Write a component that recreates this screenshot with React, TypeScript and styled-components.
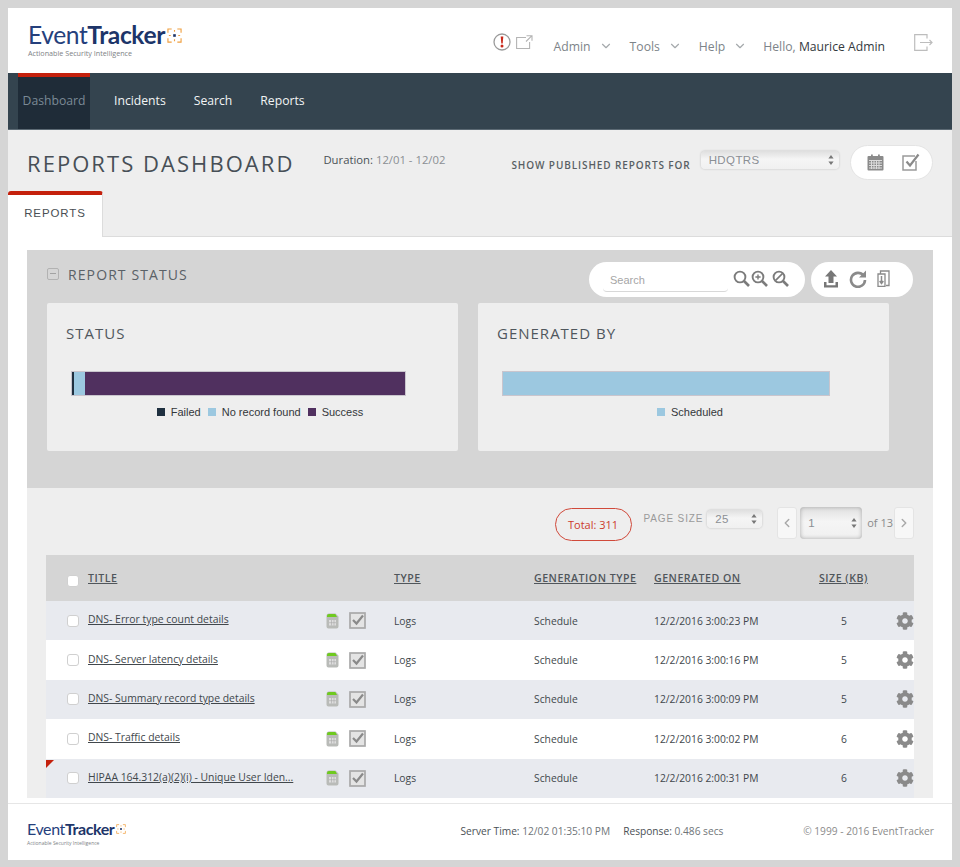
import React from 'react';
import styled, { createGlobalStyle } from 'styled-components';
import { ChevronDown, ChevronLeft, ChevronRight } from 'lucide-react';
import { FaCog } from 'react-icons/fa';

const GlobalStyle = createGlobalStyle`
  html, body {
    margin: 0;
    height: 867px;
    overflow: hidden;
    background: #d5d5d5;
    font-family: "Open Sans", "Liberation Sans", sans-serif;
    -webkit-font-smoothing: antialiased;
  }
  * { box-sizing: border-box; }
`;

const Frame = styled.div`
  padding: 8px;
  width: 960px;
  height: 867px;
`;

const Win = styled.div`
  display: flex;
  flex-direction: column;
  width: 944px;
  height: 852px;
  background: #fff;
  overflow: hidden;
`;

const Header = styled.header`
  display: flex;
  align-items: center;
  justify-content: space-between;
  flex: 0 0 65px;
  padding: 0 19px 0 20px;
`;

const LogoBox = styled.div<{ $small?: boolean }>`
  display: flex;
  flex-direction: column;
  margin-top: ${(p) => (p.$small ? '4px' : '-1px')};
`;

const LogoRow = styled.div`
  display: flex;
  align-items: center;
  gap: 2px;
`;

const LogoWord = styled.div<{ $small?: boolean }>`
  font-family: "Lato", "Open Sans", sans-serif;
  font-size: ${(p) => (p.$small ? '16px' : '24.6px')};
  line-height: ${(p) => (p.$small ? '18px' : '26px')};
  letter-spacing: -0.4px;
  color: #25407c;
  b { font-weight: 700; color: #1d3569; }
`;

const LogoTag = styled.div<{ $small?: boolean }>`
  font-size: ${(p) => (p.$small ? '5px' : '7.2px')};
  line-height: ${(p) => (p.$small ? '7px' : '9px')};
  color: #7e8286;
  margin-top: ${(p) => (p.$small ? '2px' : '1px')};
`;

const HeaderRight = styled.div`
  display: flex;
  align-items: center;
  margin-top: 11px;
`;

const AlertIcons = styled.div`
  display: flex;
  align-items: center;
  gap: 5px;
  margin-right: 21px;
  margin-top: -8px;
`;

const TopLink = styled.div`
  display: flex;
  align-items: center;
  gap: 8px;
  margin-right: 17px;
  font-size: 12.2px;
  color: #7d8489;
`;

const Hello = styled.div`
  font-size: 12.2px;
  color: #7d8489;
  margin-left: -1px;
  margin-right: 29px;
  b { font-weight: 400; color: #33393e; }
`;

const Logout = styled.div`
  display: flex;
  margin-top: -8px;
`;

const NavBar = styled.nav`
  display: flex;
  flex: 0 0 57px;
  padding-left: 10px;
  background: #34444f;
  border-bottom: 1px solid #5c6a74;
`;

const NavItem = styled.div<{ $active?: boolean }>`
  display: flex;
  align-items: center;
  justify-content: center;
  padding-bottom: ${(p) => (p.$active ? '6px' : '2px')};
  font-size: 12.2px;
  color: ${(p) => (p.$active ? '#7b8a96' : '#f2f4f5')};
  background: ${(p) => (p.$active ? '#1f2c38' : 'transparent')};
  border-top: ${(p) => (p.$active ? '4px solid #c4200c' : '0')};
  width: ${(p) => (p.$active ? '72px' : 'auto')};
  margin-right: ${(p) => (p.$active ? '24px' : '28px')};
`;

const TitleArea = styled.div`
  flex: 0 0 107px;
  background: #eeeeee;
  border-bottom: 1px solid #dcdcdc;
  display: flex;
  flex-direction: column;
`;

const TitleRow = styled.div`
  display: flex;
  align-items: center;
  height: 61px;
  padding: 5px 19px 0 19px;
`;

const PageTitle = styled.h1`
  margin: 0;
  font-size: 22px;
  font-weight: 400;
  letter-spacing: 2.05px;
  color: #474f56;
  white-space: nowrap;
`;

const Duration = styled.div`
  margin-left: 29px;
  margin-top: -8px;
  font-size: 11.3px;
  color: #4a5156;
  white-space: nowrap;
  span { color: #8a8f93; }
`;

const ShowLabel = styled.div`
  margin-left: 66px;
  margin-top: 4px;
  font-size: 10px;
  font-weight: 600;
  letter-spacing: 0.9px;
  color: #585f64;
  white-space: nowrap;
`;

const FakeSelect = styled.div<{ $w: number; $h: number; $big?: boolean }>`
  display: flex;
  align-items: center;
  justify-content: space-between;
  width: ${(p) => p.$w}px;
  height: ${(p) => p.$h}px;
  padding: 0 5px 0 8px;
  font-family: "Liberation Sans", sans-serif;
  font-size: 11.5px;
  letter-spacing: 0.4px;
  color: #8b8f94;
  border-radius: 4px;
  background: linear-gradient(#dfdfdf, #f5f5f5 45%, #f0f0f0);
  box-shadow: ${(p) => (p.$big ? 'inset 0 0 4px #a8a8a8' : '0 0 2px #b5b5b5')};
`;

const PublishedSelect = styled(FakeSelect)`
  margin-left: 10px;
  margin-top: -6px;
`;

const PageSizeSelect = styled(FakeSelect)`
  margin-top: 3px;
  margin-right: 15px;
`;

const PageSelect = styled(FakeSelect)`
  margin-left: 3px;
`;

const Pill = styled.div<{ $w: number; $h?: number }>`
  display: flex;
  align-items: center;
  width: ${(p) => p.$w}px;
  height: ${(p) => p.$h ?? 35}px;
  background: #fff;
  border-radius: 18px;
`;

const ActionPill = styled(Pill)`
  margin-left: 11px;
  margin-top: -2px;
  padding-left: 16px;
  gap: 18px;
  border: 1px solid #e4e4e4;
`;

const Tab = styled.div`
  width: 95px;
  height: 46px;
  padding-top: 12px;
  text-align: center;
  font-family: "Liberation Sans", sans-serif;
  font-size: 11.5px;
  letter-spacing: 0.9px;
  color: #4a4f54;
  background: #fff;
  border-top: 4px solid #c4200c;
  border-right: 1px solid #dcdcdc;
  border-radius: 3px 3px 0 0;
  margin-bottom: -1px;
`;

const Content = styled.main`
  flex: 1;
  min-height: 0;
  padding: 13px 19px 0;
  background: #fff;
`;

const StatusPanel = styled.section`
  height: 238px;
  padding: 12px 20px 0 19px;
  background: #d5d5d5;
`;

const StatusHead = styled.div`
  display: flex;
  align-items: center;
  height: 35px;
`;

const Collapse = styled.div`
  display: flex;
  align-items: center;
  justify-content: center;
  width: 12px;
  height: 12px;
  margin: -12px 9px 0 1px;
  border: 1px solid #b2b2b2;
  border-radius: 2px;
  &::after {
    content: '';
    width: 6px;
    height: 1px;
    background: #a2a2a2;
  }
`;

const StatusTitle = styled.h2`
  flex: 1;
  margin: -11px 0 0;
  font-size: 14px;
  font-weight: 400;
  letter-spacing: 1.1px;
  color: #5a6167;
`;

const SearchPill = styled(Pill)`
  padding-left: 14px;
  margin-right: 6px;
`;

const SearchBox = styled.div`
  width: 125px;
  height: 20px;
  padding: 2px 0 0 7px;
  margin-top: 4px;
  font-family: "Liberation Sans", sans-serif;
  font-size: 11px;
  color: #a6a6a6;
  border-bottom: 1px solid #d8d8d8;
  border-radius: 0 0 4px 4px;
`;

const SearchIcons = styled.div`
  display: flex;
  align-items: center;
  gap: 1px;
  margin: -2px 0 0 5px;
`;

const IconSpacer = styled.span`
  width: 2px;
`;

const ToolPill = styled(Pill)`
  padding-left: 12px;
  padding-bottom: 2px;
  gap: 10px;
`;

const Cards = styled.div`
  display: flex;
  gap: 20px;
  margin-top: 6px;
  margin-left: 1px;
`;

const Card = styled.div`
  width: 411px;
  height: 148px;
  padding: 19px 0 0 19px;
  background: #eeeeee;
  border-radius: 2px;
`;

const CardTitle = styled.h3`
  margin: 0;
  font-size: 15px;
  line-height: 22px;
  font-weight: 400;
  letter-spacing: 1px;
  color: #50575d;
`;

const Bar = styled.div<{ $w: number }>`
  display: flex;
  width: ${(p) => p.$w}px;
  height: 25px;
  margin: 27px 0 0 5px;
  border: 1px solid #c9c5cd;
`;

const BarPart = styled.div<{ $color: string; $w?: number }>`
  flex: ${(p) => (p.$w ? `0 0 ${p.$w}px` : '1')};
  background: ${(p) => p.$color};
`;

const Legend = styled.div<{ $w: number }>`
  display: flex;
  justify-content: center;
  gap: 7px;
  width: ${(p) => p.$w}px;
  margin-top: 9px;
  font-family: "Liberation Sans", sans-serif;
  font-size: 11px;
  line-height: 14px;
  color: #33373a;
`;

const LegendItem = styled.span<{ $color: string }>`
  display: flex;
  align-items: center;
  gap: 6px;
  white-space: nowrap;
  &::before {
    content: '';
    width: 8px;
    height: 8px;
    background: ${(p) => p.$color};
  }
`;

const ListPanel = styled.section`
  height: 310px;
  padding: 0 19px;
  background: #eeeeee;
`;

const Pager = styled.div`
  display: flex;
  align-items: flex-start;
  justify-content: flex-end;
  height: 67px;
  padding-top: 19px;
`;

const Total = styled.div`
  display: flex;
  align-items: center;
  justify-content: center;
  width: 77px;
  height: 33px;
  margin: 1px 12px 0 0;
  font-size: 11px;
  color: #cc3b2c;
  border: 1px solid #d0493a;
  border-radius: 17px;
`;

const PageSizeLabel = styled.div`
  margin: 4px 4px 0 0;
  font-family: "Liberation Sans", sans-serif;
  font-size: 10px;
  line-height: 16px;
  letter-spacing: 0.85px;
  color: #9a9a9a;
`;

const PagerBtn = styled.div`
  display: flex;
  align-items: center;
  justify-content: center;
  width: 20px;
  height: 32px;
  color: #a9a9a9;
  background: #f7f7f7;
  border: 1px solid #e4e4e4;
  border-radius: 3px;
`;

const OfPages = styled.div`
  margin: 8px 1px 0 5px;
  font-size: 11px;
  color: #8a8a8a;
  white-space: nowrap;
`;

const Grid = styled.div`
  display: grid;
  grid-template-columns: 42px 238px 23px 45px 140px 120px 165px 50px 45px;
  align-items: center;
  font-size: 10.3px;
  color: #41474c;
`;

const HeadRow = styled(Grid)`
  height: 46px;
  background: #d5d5d5;
  font-size: 10.6px;
  font-weight: 600;
  letter-spacing: 0.5px;
  color: #50565b;
  span {
    text-decoration: underline;
    white-space: nowrap;
  }
`;

const Row = styled(Grid)<{ $odd: boolean }>`
  position: relative;
  height: 39.4px;
  background: ${(p) => (p.$odd ? '#e8eaef' : '#fff')};
`;

const Flag = styled.div`
  position: absolute;
  left: 0;
  top: 1px;
  border-top: 8px solid #c4200c;
  border-right: 8px solid transparent;
`;

const Check = styled.div<{ $head?: boolean }>`
  width: 12px;
  height: 12px;
  margin: ${(p) => (p.$head ? '6px 0 0 21px' : '0 0 0 21px')};
  background: #fff;
  border: 1px solid #d0d0d0;
  border-radius: 3px;
`;

const TitleLink = styled.a`
  font-size: 10.4px;
  color: #41474c;
  text-decoration: underline;
  white-space: nowrap;
  margin-top: -3px;
`;

const Cell = styled.div<{ $center?: boolean }>`
  white-space: nowrap;
  text-align: ${(p) => (p.$center ? 'center' : 'left')};
`;

const Gear = styled.div`
  display: flex;
  justify-content: flex-end;
  color: #8a8a8a;
`;

const Footer = styled.footer`
  display: flex;
  align-items: center;
  flex: 0 0 57px;
  margin-top: 5px;
  padding: 0 18px 2px 19px;
  background: #fff;
  border-top: 1px solid #e6e6e6;
  font-size: 10.2px;
  color: #4a5055;
`;

const FooterStats = styled.div`
  display: flex;
  gap: 13px;
  margin-left: 334px;
  span { color: #6f7579; }
`;

const Copyright = styled.div`
  margin-left: auto;
  color: #8b8b8b;
`;

const TargetMark = ({ size }: { size: number }) => (
  <svg width={size} height={size} viewBox="0 0 16 16" fill="none" stroke="#f0a040" strokeWidth="1.2">
    <path d="M1 5V1h4M11 1h4v4M15 11v4h-4M5 15H1v-4M8 2v2M8 12v2M2 8h2M12 8h2" />
    <rect x="6.6" y="6.6" width="2.8" height="2.8" fill="#1d3569" stroke="none" />
  </svg>
);

const Logo = ({ small }: { small?: boolean }) => (
  <LogoBox $small={small}>
    <LogoRow>
      <LogoWord $small={small}>
        Event<b>Tracker</b>
      </LogoWord>
      <TargetMark size={small ? 10 : 15} />
    </LogoRow>
    <LogoTag $small={small}>Actionable Security Intelligence</LogoTag>
  </LogoBox>
);

const Updown = () => (
  <svg width="6" height="10" viewBox="0 0 6 10" fill="#777">
    <path d="M3 0l2.6 3.6H.4zM3 10L.4 6.4h5.2z" />
  </svg>
);

const Glass = ({ mark }: { mark?: 'plus' | 'slash' }) => (
  <svg width="17" height="17" viewBox="0 0 17 17" fill="none" stroke="#7b7b7b" strokeWidth="1.9">
    <circle cx="7" cy="7" r="5.4" />
    <path d="M11 11l5 5" strokeWidth="2.6" />
    {mark === 'plus' && <path d="M4.4 7h5.2M7 4.4v5.2" strokeWidth="1.4" />}
    {mark === 'slash' && <path d="M3.6 10.4l6.8-6.8" strokeWidth="1.6" />}
  </svg>
);

const DocIcon = () => (
  <svg width="13" height="16" viewBox="0 0 13 16">
    <path d="M.5 3A2.5 2.5 0 0 1 3 .5h6.5l3 3v10a2 2 0 0 1-2 2h-8a2 2 0 0 1-2-2z" fill="#b9bbb8" />
    <path d="M1 3a2 2 0 0 1 2-2h6.3L11 4H1z" fill="#6fca1f" />
    <rect x="3" y="7" width="7" height="5.5" fill="#dedede" />
    <path d="M3 9.7h7M5.5 7v5.5M8 7v5.5" stroke="#a8a8a8" strokeWidth="0.6" />
  </svg>
);

const CheckIcon = () => (
  <svg width="17" height="17" viewBox="0 0 17 17" fill="none">
    <rect x="1" y="1" width="15" height="15" fill="#e4e4e4" stroke="#a9a9a9" strokeWidth="1.7" />
    <path d="M4 8l3.5 3.5L14 3.5" stroke="#8a8a8a" strokeWidth="2.2" />
  </svg>
);

const rows = [
  { title: 'DNS- Error type count details', on: '12/2/2016 3:00:23 PM', size: 5 },
  { title: 'DNS- Server latency details', on: '12/2/2016 3:00:16 PM', size: 5 },
  { title: 'DNS- Summary record type details', on: '12/2/2016 3:00:09 PM', size: 5 },
  { title: 'DNS- Traffic details', on: '12/2/2016 3:00:02 PM', size: 6 },
  { title: 'HIPAA 164.312(a)(2)(i) - Unique User Iden...', on: '12/2/2016 2:00:31 PM', size: 6, flag: true },
];

export default function App() {
  return (
    <Frame>
      <GlobalStyle />
      <Win>
        <Header>
          <Logo />
          <HeaderRight>
            <AlertIcons>
              <svg width="18" height="18" viewBox="0 0 18 18" fill="none">
                <circle cx="9" cy="9" r="8" stroke="#9a9a9a" strokeWidth="1.3" />
                <path d="M7.7 3.5h2.6l-.6 7H8.300z" fill="#c9281a" />
                <circle cx="9" cy="13" r="1.5" fill="#c9281a" />
              </svg>
              <svg width="17" height="14" viewBox="0 0 17 14" fill="none" stroke="#b4b4b4" strokeWidth="1.1">
                <path d="M10 2.5H.6v11h13V7M10.5.7H16v5M16 .7l-6 5.800" />
              </svg>
            </AlertIcons>
            <TopLink>
              Admin <ChevronDown size={14} color="#a5a9ac" />
            </TopLink>
            <TopLink>
              Tools <ChevronDown size={14} color="#a5a9ac" />
            </TopLink>
            <TopLink>
              Help <ChevronDown size={14} color="#a5a9ac" />
            </TopLink>
            <Hello>
              Hello, <b>Maurice Admin</b>
            </Hello>
            <Logout>
              <svg width="19" height="17" viewBox="0 0 19 17" fill="none" stroke="#bdbdbd" strokeWidth="1.2">
                <path d="M13 4.5V.7H.7v15.600H13v-3.800M6 8.500h12M15.500 6l2.500 2.500L15.500 11" />
              </svg>
            </Logout>
          </HeaderRight>
        </Header>

        <NavBar>
          <NavItem $active>Dashboard</NavItem>
          <NavItem>Incidents</NavItem>
          <NavItem>Search</NavItem>
          <NavItem>Reports</NavItem>
        </NavBar>

        <TitleArea>
          <TitleRow>
            <PageTitle>REPORTS DASHBOARD</PageTitle>
            <Duration>
              Duration: <span>12/01 - 12/02</span>
            </Duration>
            <ShowLabel>SHOW PUBLISHED REPORTS FOR</ShowLabel>
            <PublishedSelect $w={139} $h={18}>
              HDQTRS <Updown />
            </PublishedSelect>
            <ActionPill $w={84}>
              <svg width="17" height="17" viewBox="0 0 17 17">
                <rect x="0.5" y="2" width="16" height="14.5" rx="1" fill="#8b8b8b" />
                <rect x="4" y="0.5" width="1.8" height="3" fill="#8b8b8b" />
                <rect x="11" y="0.5" width="1.8" height="3" fill="#8b8b8b" />
                <path d="M2 6.5h13M2 9h13M2 11.5h13M2 14h13M4.5 6v9M7 6v9M9.5 6v9M12 6v9" stroke="#dcdcdc" strokeWidth="1" />
              </svg>
              <svg width="18" height="18" viewBox="0 0 18 18" fill="none">
                <path d="M13 3H1v14h13V8" stroke="#9a9a9a" strokeWidth="1.5" />
                <path d="M4.5 8.5l3.5 4 8.500-11" stroke="#8a8a8a" strokeWidth="2.2" />
              </svg>
            </ActionPill>
          </TitleRow>
          <Tab>REPORTS</Tab>
        </TitleArea>

        <Content>
          <StatusPanel>
            <StatusHead>
              <Collapse />
              <StatusTitle>REPORT STATUS</StatusTitle>
              <SearchPill $w={216}>
                <SearchBox>Search</SearchBox>
                <SearchIcons>
                  <Glass />
                  <Glass mark="plus" />
                  <IconSpacer />
                  <Glass mark="slash" />
                </SearchIcons>
              </SearchPill>
              <ToolPill $w={102}>
                <svg width="16" height="18" viewBox="0 0 16 18" fill="#777">
                  <path d="M8 0l6 6.5h-3.5V13h-5V6.5H2zM1 12h2.5v3.300h9V12H15v5.500H1z" />
                </svg>
                <svg width="18" height="18" viewBox="0 0 18 18" fill="none">
                  <path d="M14.500 5.500A7 7 0 1 0 16 10" stroke="#8a8a8a" strokeWidth="2.6" />
                  <path d="M17 0.500v7h-7z" fill="#8a8a8a" />
                </svg>
                <svg width="13" height="17" viewBox="0 0 13 17" fill="none" stroke="#8a8a8a" strokeWidth="1.3">
                  <path d="M3.500 4V1h8.500v14.500H9" />
                  <path d="M1 4h7v12.300H1z" />
                  <path d="M4.500 6v7M2.700 11l1.800 2.500L6.300 11" strokeWidth="1.5" />
                </svg>
              </ToolPill>
            </StatusHead>
            <Cards>
              <Card>
                <CardTitle>STATUS</CardTitle>
                <Bar $w={335}>
                  <BarPart $color="#1f2f3f" $w={2} />
                  <BarPart $color="#9cc8e0" $w={11} />
                  <BarPart $color="#50305f" />
                </Bar>
                <Legend $w={388}>
                  <LegendItem $color="#1f3040">Failed</LegendItem>
                  <LegendItem $color="#9cc8e0">No record found</LegendItem>
                  <LegendItem $color="#50305f">Success</LegendItem>
                </Legend>
              </Card>
              <Card>
                <CardTitle>GENERATED BY</CardTitle>
                <Bar $w={328}>
                  <BarPart $color="#9cc8e0" />
                </Bar>
                <Legend $w={386}>
                  <LegendItem $color="#9cc8e0">Scheduled</LegendItem>
                </Legend>
              </Card>
            </Cards>
          </StatusPanel>

          <ListPanel>
            <Pager>
              <Total>Total: 311</Total>
              <PageSizeLabel>PAGE SIZE</PageSizeLabel>
              <PageSizeSelect $w={55} $h={18}>
                25 <Updown />
              </PageSizeSelect>
              <PagerBtn>
                <ChevronLeft size={14} strokeWidth={2.5} />
              </PagerBtn>
              <PageSelect $big $w={62} $h={32}>
                1 <Updown />
              </PageSelect>
              <OfPages>of 13</OfPages>
              <PagerBtn>
                <ChevronRight size={14} strokeWidth={2.5} />
              </PagerBtn>
            </Pager>

            <HeadRow>
              <Check $head />
              <span>TITLE</span>
              <i />
              <i />
              <span>TYPE</span>
              <span>GENERATION TYPE</span>
              <span>GENERATED ON</span>
              <span>SIZE (KB)</span>
              <i />
            </HeadRow>
            {rows.map((r, i) => (
              <Row key={r.title} $odd={i % 2 === 0}>
                {r.flag && <Flag />}
                <Check />
                <TitleLink>{r.title}</TitleLink>
                <DocIcon />
                <CheckIcon />
                <Cell>Logs</Cell>
                <Cell>Schedule</Cell>
                <Cell>{r.on}</Cell>
                <Cell $center>{r.size}</Cell>
                <Gear>
                  <FaCog size={18} />
                </Gear>
              </Row>
            ))}
          </ListPanel>
        </Content>

        <Footer>
          <Logo small />
          <FooterStats>
            <div>
              Server Time: <span>12/02 01:35:10 PM</span>
            </div>
            <div>
              Response: <span>0.486 secs</span>
            </div>
          </FooterStats>
          <Copyright>© 1999 - 2016 EventTracker</Copyright>
        </Footer>
      </Win>
    </Frame>
  );
}
